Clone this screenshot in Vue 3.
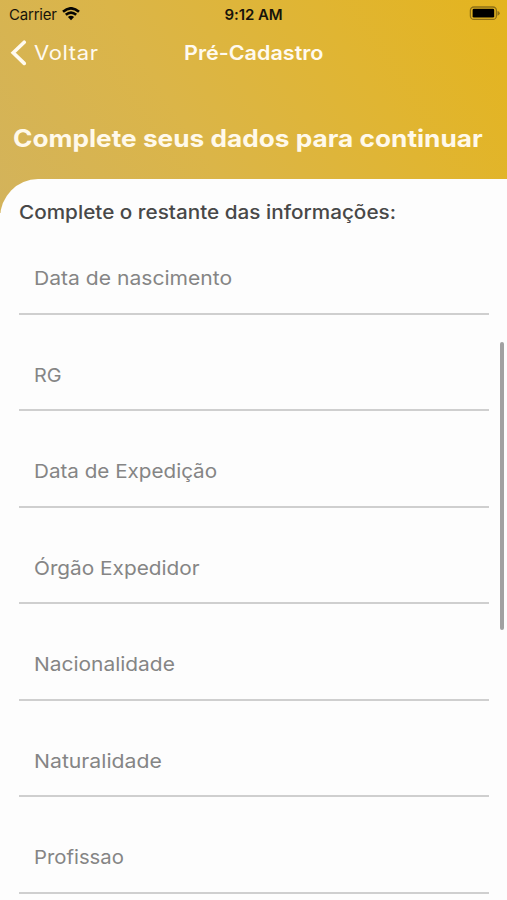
<script setup>
const fields = [
  { label: 'Data de nascimento', stretch: 1.094 },
  { label: 'RG', stretch: 1.03 },
  { label: 'Data de Expedição', stretch: 1.07 },
  { label: 'Órgão Expedidor', stretch: 1.078 },
  { label: 'Nacionalidade', stretch: 1.085 },
  { label: 'Naturalidade', stretch: 1.1 },
  { label: 'Profissao', stretch: 1.053 },
]
</script>

<template>
  <div class="screen">
    <header class="hero">
      <div class="status">
        <div class="network">
          <span class="carrier">Carrier</span>
          <svg class="wifi" width="18" height="14" viewBox="0 0 18 14">
            <path d="M1 4.8Q9-2.2 17 4.8" />
            <path d="M3.8 7.8Q9 3.3 14.2 7.8" />
            <path class="dot" d="M9 13.2 5.9 10Q9 7.5 12.1 10Z" />
          </svg>
        </div>
        <span class="clock">9:12 AM</span>
        <svg class="battery" width="31" height="15" viewBox="0 0 31 15">
          <rect class="shell" x="1.4" y="1" width="26" height="12.4" rx="3.5" />
          <rect x="3.6" y="2.8" width="21.6" height="8.8" rx="1.3" />
          <path class="cap" d="M28.5 5Q30.7 5.6 30.7 7.3T28.5 9.7Z" />
        </svg>
      </div>
      <nav class="nav">
        <div class="back">
          <svg width="17" height="26" viewBox="0 0 17 26"><path d="M14.2 2.2 3.2 12.8l11 10.6" /></svg>
          <span class="back-label">Voltar</span>
        </div>
        <span class="title">Pré-Cadastro</span>
      </nav>
      <h1 class="heading">Complete seus dados para continuar</h1>
    </header>
    <main class="card">
      <h2 class="intro">Complete o restante das informações:</h2>
      <div v-for="f in fields" :key="f.label" class="field">
        <span class="label" :style="{ transform: `scaleX(${f.stretch})` }">{{ f.label }}</span>
      </div>
    </main>
    <div class="scrollbar"></div>
  </div>
</template>

<style>
body { margin: 0; overflow: hidden; }
</style>

<style scoped>
.screen {
  position: relative;
  width: 507px;
  height: 900px;
  overflow: hidden;
  background: #fdfdfd;
  font-family: Inter, "Liberation Sans", sans-serif;
}
.hero {
  box-sizing: border-box;
  height: 213px;
  background: linear-gradient(57deg, #d3b35b 0%, #dbb548 38%, #e0b532 70%, #e4b41e 100%);
}
.status {
  display: grid;
  grid-template-columns: 1fr auto 1fr;
  align-items: center;
  height: 28px;
  padding: 0 7px 0 9px;
  font-size: 15px;
  color: #17130a;
}
.network { display: flex; align-items: center; gap: 5px; }
.carrier { letter-spacing: -0.2px; }
.wifi { fill: none; stroke: #070603; stroke-width: 2.6; }
.wifi .dot { fill: #070603; stroke: none; }
.clock { padding-right: 2px; font-weight: 600; letter-spacing: -0.1px; }
.battery { justify-self: end; margin-top: -1px; }
.battery .shell { fill: none; stroke: #8d7017; stroke-width: 1.3; }
.battery .cap { fill: #8d7017; }
.nav {
  display: grid;
  grid-template-columns: 1fr auto 1fr;
  align-items: center;
  height: 49px;
  padding: 0 10px;
  color: #fffaf0;
}
.back { display: flex; align-items: center; gap: 7px; }
.back svg { fill: none; stroke: currentColor; stroke-width: 3.6; stroke-linecap: round; }
.back-label {
  font-size: 20.3px;
  letter-spacing: 0.6px;
  transform: scaleX(1.085);
  transform-origin: left;
}
.title { font-size: 20px; font-weight: 600; transform: scaleX(1.077); }
.heading {
  width: max-content;
  margin: 46px 0 0 13px;
  font-size: 24px;
  line-height: 32px;
  font-weight: 700;
  white-space: nowrap;
  color: #fff9ea;
  transform: scaleX(1.093);
  transform-origin: left;
}
.card {
  position: relative;
  box-sizing: border-box;
  height: 722px;
  margin-top: -34.5px;
  padding: 20.5px 18px 0 19px;
  border-top-left-radius: 38px 39px;
  background: #fdfdfd;
}
.intro {
  width: max-content;
  margin: 0;
  height: 19px;
  font-size: 18.8px;
  line-height: 28px;
  font-weight: 500;
  white-space: nowrap;
  color: #484848;
  transform: scaleX(1.103);
  transform-origin: left;
}
.field {
  box-sizing: border-box;
  height: 96.5px;
  padding: 46px 15px 0;
  border-bottom: 2px solid #cfcfcf;
  font-size: 19.3px;
  line-height: 28px;
  color: #858585;
}
.label { display: inline-block; transform-origin: left; }
.scrollbar {
  position: absolute;
  top: 342px;
  right: 3px;
  width: 4px;
  height: 288px;
  border-radius: 2px;
  background: #a1a1a1;
}
</style>
